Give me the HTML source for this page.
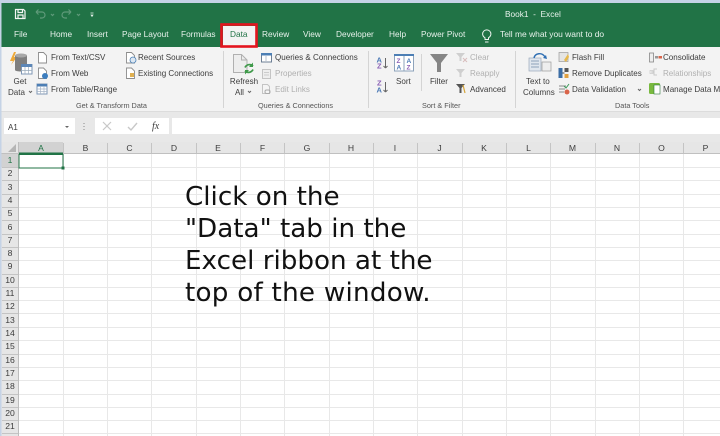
<!DOCTYPE html>
<html><head><meta charset="utf-8">
<style>
html,body{margin:0;padding:0;background:#fff}
#p{position:relative;width:720px;height:436px;overflow:hidden;background:#fff;font-family:"Liberation Sans",sans-serif}
.t{position:absolute;white-space:nowrap;font-size:8.05px;line-height:11px;color:#3c3c3c;filter:blur(.3px)}
.w{color:#e8f2ec;font-size:8.3px}
.d{color:#b0b0b0}
.g{color:#555;font-size:7.3px}
.h{font-size:8.6px}
.c{text-align:center;transform:translateX(-50%)}
.big{position:absolute;left:185px;font-family:"DejaVu Sans",sans-serif;font-size:26.2px;line-height:32px;color:#111;white-space:nowrap}
svg{position:absolute;left:0;top:0}
svg text{font-family:"Liberation Sans",sans-serif;font-weight:bold}
</style></head><body><div id="p">
<svg width="720" height="436" viewBox="0 0 720 436">
<!-- chrome -->
<rect width="720" height="436" fill="#fff"/>
<rect width="720" height="3" fill="#c5d3e6"/>
<rect y="3" width="720" height="44" fill="#217346"/>
<rect y="0" width="1.5" height="436" fill="#c5d3e6"/>
<rect x="1.5" y="47" width="719" height="64" fill="#f3f3f3"/>
<rect x="1.5" y="111" width="719" height="31" fill="#e8e8e8"/>
<rect x="1.5" y="111" width="719" height="1" fill="#dcdcdc"/>
<!-- formula bar -->
<rect x="4" y="118" width="71" height="16" fill="#fff"/>
<rect x="95" y="118" width="74" height="16" fill="#fff"/>
<rect x="172" y="118" width="548" height="16" fill="#fff"/>
<path d="M65 126l2 2 2-2z" fill="#666"/>
<path d="M84 123v1M84 126v1M84 129v1" stroke="#999" stroke-width="1.2"/>
<path d="M103 122l8 8M111 122l-8 8" stroke="#c8c8c8" stroke-width="1.2" fill="none"/>
<path d="M128 127l3 3 6-7" stroke="#c8c8c8" stroke-width="1.4" fill="none"/>
<!-- headers -->
<rect x="1.5" y="142" width="718.5" height="12" fill="#e6e6e6"/>
<rect x="1.5" y="153" width="718.5" height="1" fill="#c0c0c0"/>
<rect x="1.5" y="154" width="17.5" height="282" fill="#e6e6e6"/>
<rect x="18" y="142" width="1" height="294" fill="#bdbdbd"/>
<rect x="19" y="142" width="44" height="12" fill="#d2d2d2"/>
<rect x="19" y="152.500" width="44" height="1.500" fill="#217346"/>
<rect x="1.5" y="154" width="17" height="13.500" fill="#d2d2d2"/>
<path d="M16 144v8h-8z" fill="#b5b5b5"/>
<!-- grid -->
<g stroke="#e8e8e8" stroke-width="1">
<path d="M19 167.500H720M19 180.500H720M19 194.500H720M19 207.500H720M19 220.500H720M19 234.500H720M19 247.500H720M19 260.500H720M19 274.500H720M19 287.500H720M19 300.500H720M19 313.500H720M19 327.500H720M19 340.500H720M19 354.500H720M19 367.500H720M19 380.500H720M19 394.500H720M19 407.500H720M19 420.500H720M19 433.500H720"/>
<path d="M63.500 154V436M107.500 154V436M151.500 154V436M196.500 154V436M240.500 154V436M284.500 154V436M329.500 154V436M373.500 154V436M417.500 154V436M462.500 154V436M506.500 154V436M550.500 154V436M595.500 154V436M639.500 154V436M683.500 154V436"/>
</g>
<g stroke="#c4c4c4" stroke-width="1">
<path d="M63.500 143V153M107.500 143V153M151.500 143V153M196.500 143V153M240.500 143V153M284.500 143V153M329.500 143V153M373.500 143V153M417.500 143V153M462.500 143V153M506.500 143V153M550.500 143V153M595.500 143V153M639.500 143V153M683.500 143V153"/>
<path d="M2 167.500H18M2 180.500H18M2 194.500H18M2 207.500H18M2 220.500H18M2 234.500H18M2 247.500H18M2 260.500H18M2 274.500H18M2 287.500H18M2 300.500H18M2 313.500H18M2 327.500H18M2 340.500H18M2 354.500H18M2 367.500H18M2 380.500H18M2 394.500H18M2 407.500H18M2 420.500H18M2 433.500H18"/>
</g>
<!-- selected cell -->
<rect x="19" y="154.500" width="44" height="13.500" fill="#fff" stroke="#217346" stroke-width="1"/>
<rect x="61.500" y="166.500" width="3" height="3" fill="#217346"/>
<!-- QAT -->
<g fill="none" stroke="#f2f6f3" stroke-width="1.200">
<path d="M15.500 9.500h8l1.500 1.500v7.500h-9.500z"/><path d="M18 9.500v3h4.500v-3M18 18.500v-3.500h5v3.500"/>
</g>
<g fill="none" stroke="#5f9a7a" stroke-width="1.200">
<path d="M36 12h6a3 3 0 0 1 0 6h-2M36 12l2.500-2.500M36 12l2.500 2.500"/>
<path d="M71 12h-6a3 3 0 0 0 0 6h2M71 12l-2.500-2.500M71 12l-2.500 2.500"/>
<path d="M51 14l1.500 1.500 1.500-1.500M77 14l1.500 1.500 1.500-1.500"/>
</g>
<path d="M90.500 13h3M91 15h2l-1 1.500z" fill="#e8f2ec" stroke="#e8f2ec" stroke-width=".7"/>
<!-- red data tab -->
<rect x="223" y="26" width="33" height="21" fill="#f3f3f3"/>
<rect x="221.500" y="24.500" width="35" height="22" fill="none" stroke="#e4141e" stroke-width="2.600"/>
<!-- lightbulb -->
<path d="M485 42h3.500M485 39.500h3.500v-1.700c1.500-1 2.400-2.200 2.400-3.800a4.150 4.150 0 0 0-8.300 0c0 1.600.9 2.800 2.400 3.800z" fill="none" stroke="#eef5f0" stroke-width="1"/>
<!-- group separators -->
<g fill="#d4d4d4">
<rect x="223" y="51" width="1" height="57"/><rect x="368" y="51" width="1" height="57"/><rect x="421" y="54" width="1" height="37"/><rect x="515" y="51" width="1" height="57"/>
</g>
<!-- Get data -->
<path d="M14 52l-4 9h3l-2 4 6-8h-3l2-5z" fill="#eeaa3a"/>
<path d="M15 56c0-2.500 12-2.500 12 0v14c0 2-12 2-12 0z" fill="#7f7f7f"/><ellipse cx="21" cy="55.500" rx="6" ry="2" fill="#a8a8a8"/>
<rect x="21.500" y="64.500" width="10.500" height="9.500" fill="#fff" stroke="#7f97b5"/><rect x="21" y="64" width="11" height="3" fill="#5d87b7"/>
<path d="M25 67v7M28.500 67v7M21 70.500h11" stroke="#9ab" stroke-width=".7"/>
<path d="M29 91l1.500 1.500 1.500-1.500" stroke="#666" fill="none"/>
<!-- small icons left -->
<g fill="#fff" stroke="#8c8c8c" stroke-width=".9">
<path d="M38.500 52.500h5l3 3v7.500h-8z"/><path d="M38.500 68h5l3 3v7.500h-8z"/>
<path d="M126.500 52.500h5l3 3v7.500h-8z"/><path d="M126.500 68h5l3 3v7.500h-8z"/>
</g>
<circle cx="45" cy="76" r="3" fill="#3d7ebf"/>
<circle cx="133" cy="60" r="3" fill="#dce7f2" stroke="#4a7fb5" stroke-width=".8"/>
<rect x="130" y="73" width="4" height="4" fill="#e0b050"/>
<rect x="37" y="84" width="10" height="10" fill="#fff" stroke="#7f97b5"/><rect x="37" y="84" width="10" height="2.500" fill="#4d7fb5"/>
<path d="M40.500 86v8M44 86v8M37 89h10M37 91.500h10" stroke="#a7b5c6" stroke-width=".7"/>
<!-- Refresh -->
<path d="M233.500 54.500h8l5.500 5.500v12.500h-13.500z" fill="#ededed" stroke="#b0b0b0"/>
<path d="M241.500 54.500v5.500h5.500" fill="none" stroke="#b0b0b0"/>
<path d="M253 66a5 5 0 0 0-8 1.500M245 71a5 5 0 0 0 8-1.500" fill="none" stroke="#3f9a4a" stroke-width="1.700"/>
<path d="M253 62.500v4.500h-4zM245 74.500v-4.500h4z" fill="#3f9a4a"/>
<path d="M248 91l1.500 1.500 1.500-1.500" stroke="#666" fill="none"/>
<!-- queries icons -->
<rect x="261.500" y="53.500" width="10" height="8.500" fill="#fff" stroke="#6d7f95"/><rect x="261" y="53" width="11" height="2.500" fill="#4d7fb5"/>
<path d="M266 56v6" stroke="#b8c2cc"/>
<rect x="262.500" y="69.500" width="8" height="9" fill="#eee" stroke="#c4c4c4"/><path d="M264 72.500h5M264 75h5" stroke="#ccc"/>
<path d="M262.500 84.500h5l2 2v7h-7z" fill="#f5f5f5" stroke="#c4c4c4"/><rect x="265" y="90" width="5" height="3.500" rx="1.500" fill="none" stroke="#aaa"/>
<!-- sort icons -->
<text x="376.500" y="62.500" font-size="7.500" fill="#4a78b5">A</text>
<text x="377" y="68.500" font-size="7.500" fill="#8a5fb5">Z</text>
<text x="377" y="85.500" font-size="7.500" fill="#8a5fb5">Z</text>
<text x="376.500" y="92.500" font-size="7.500" fill="#4a78b5">A</text>
<path d="M385.500 58v10M385.500 68l-2-2M385.500 68l2-2M385.500 82v10M385.500 92l-2-2M385.500 92l2-2" stroke="#666" fill="none"/>
<rect x="394.500" y="55.500" width="19" height="15.500" fill="#fff" stroke="#8ea3bb"/>
<rect x="394" y="54" width="20" height="2" fill="#4d7fb5"/><path d="M404 56v15" stroke="#8ea3bb"/>
<text x="396.500" y="63" font-size="6.500" fill="#8a5fb5">Z</text><text x="396.500" y="69.500" font-size="6.500" fill="#4a78b5">A</text>
<text x="406.500" y="63" font-size="6.500" fill="#4a78b5">A</text><text x="406.500" y="69.500" font-size="6.500" fill="#8a5fb5">Z</text>
<!-- filter -->
<path d="M430 54h18l-7 9v9h-4v-9z" fill="#858585"/>
<path d="M456 53h9l-3.500 4v4h-2v-4z" fill="#cfcfcf"/><path d="M463 58l4 4M467 58l-4 4" stroke="#d8bcbc"/>
<path d="M456 69h9l-3.500 4v4h-2v-4z" fill="#cfcfcf"/>
<path d="M456 84h9l-3.500 4v5h-2v-5z" fill="#555"/><path d="M463 85l2 8" stroke="#d6a53a" stroke-width="1.200"/>
<!-- text to columns -->
<rect x="529" y="58" width="12" height="13" fill="#dfe6ee" stroke="#9aa9ba" stroke-width=".7"/>
<path d="M531 61h8M531 64h8M531 67h8" stroke="#8da3bb"/>
<rect x="542" y="62" width="9" height="9" fill="#eee" stroke="#999" stroke-width=".7"/>
<path d="M534 58c1-5 8-6 11-1" fill="none" stroke="#2f6fb3" stroke-width="1.400"/><path d="M547 59l-4-1 3-3z" fill="#2f6fb3"/>
<!-- data tools -->
<rect x="559" y="52.500" width="9" height="9" fill="#e5e5e5" stroke="#999" stroke-width=".7"/><path d="M564 60l4-6 1 3-3 5z" fill="#e6b84c"/>
<rect x="558.500" y="68" width="4" height="10" fill="#3c6ea6"/><rect x="564.500" y="68" width="4" height="4" fill="#555"/><rect x="564.500" y="74" width="4" height="4" fill="#e0a040"/><path d="M562.500 73h2" stroke="#444"/>
<path d="M559 86h7M559 89h6M559 92h5" stroke="#888"/><path d="M564 86l2 2 3-4" stroke="#3c9a5a" fill="none"/><circle cx="567" cy="92" r="2.500" fill="#d9644a"/>
<rect x="649.500" y="53" width="4" height="9" fill="#eee" stroke="#888" stroke-width=".8"/><rect x="655" y="56" width="3" height="2.500" fill="#999"/><rect x="658.500" y="56" width="3.500" height="2.500" fill="#d9644a"/>
<path d="M651 72h3M654 72v-3h3M654 72v3h3" stroke="#c8c8c8" fill="none"/><rect x="650" y="70.500" width="3" height="3" fill="none" stroke="#c8c8c8" stroke-width=".7"/>
<rect x="649" y="83" width="11" height="11" rx="1.500" fill="#79b93f"/><rect x="654" y="85" width="6" height="9" fill="#fff" stroke="#2f7a3f" stroke-width=".6"/>
<path d="M638 89l1.500 1.500 1.500-1.500" stroke="#666" fill="none"/>
</svg>
<span class="t w" style="left:14px;top:29px">File</span>
<span class="t w" style="left:50px;top:29px">Home</span>
<span class="t w" style="left:87px;top:29px">Insert</span>
<span class="t w" style="left:122px;top:29px">Page Layout</span>
<span class="t w" style="left:181px;top:29px">Formulas</span>
<span class="t" style="left:230px;top:29px;color:#217346;font-size:8.3px">Data</span>
<span class="t w" style="left:262px;top:29px">Review</span>
<span class="t w" style="left:303px;top:29px">View</span>
<span class="t w" style="left:336px;top:29px">Developer</span>
<span class="t w" style="left:389px;top:29px">Help</span>
<span class="t w" style="left:421px;top:29px">Power Pivot</span>
<span class="t w" style="left:500px;top:29px;font-size:8.45px">Tell me what you want to do</span>
<span class="t w" style="left:505px;top:9px">Book1 &nbsp;- &nbsp;Excel</span>
<span class="t c" style="left:20px;top:76px">Get</span>
<span class="t" style="left:8px;top:87px">Data</span>
<span class="t" style="left:51px;top:52px">From Text/CSV</span>
<span class="t" style="left:51px;top:68px">From Web</span>
<span class="t" style="left:51px;top:84px">From Table/Range</span>
<span class="t" style="left:138px;top:52px">Recent Sources</span>
<span class="t" style="left:138px;top:68px">Existing Connections</span>
<span class="t g" style="left:76px;top:100px">Get &amp; Transform Data</span>
<span class="t c" style="left:244px;top:76px">Refresh</span>
<span class="t" style="left:235px;top:87px">All</span>
<span class="t" style="left:275px;top:52px">Queries &amp; Connections</span>
<span class="t d" style="left:275px;top:68px">Properties</span>
<span class="t d" style="left:275px;top:84px">Edit Links</span>
<span class="t g" style="left:258px;top:100px">Queries &amp; Connections</span>
<span class="t" style="left:396px;top:76px">Sort</span>
<span class="t" style="left:430px;top:76px">Filter</span>
<span class="t d" style="left:470px;top:52px">Clear</span>
<span class="t d" style="left:470px;top:68px">Reapply</span>
<span class="t" style="left:470px;top:84px">Advanced</span>
<span class="t g" style="left:422px;top:100px">Sort &amp; Filter</span>
<span class="t" style="left:526px;top:76px">Text to</span>
<span class="t" style="left:523px;top:87px">Columns</span>
<span class="t" style="left:572px;top:52px">Flash Fill</span>
<span class="t" style="left:572px;top:68px">Remove Duplicates</span>
<span class="t" style="left:572px;top:84px">Data Validation</span>
<span class="t" style="left:663px;top:52px">Consolidate</span>
<span class="t d" style="left:663px;top:68px">Relationships</span>
<span class="t" style="left:663px;top:84px">Manage Data M</span>
<span class="t g" style="left:615px;top:100px">Data Tools</span>
<span class="t" style="left:8px;top:122px;font-size:8px">A1</span>
<span class="t" style="left:152px;top:121px;font-family:'Liberation Serif',serif;font-style:italic;font-size:10px">fx</span>
<span class="t c h" style="left:41px;top:143px;color:#217346">A</span>
<span class="t c h" style="left:85.500px;top:143px">B</span><span class="t c h" style="left:129.500px;top:143px">C</span><span class="t c h" style="left:174px;top:143px">D</span><span class="t c h" style="left:218px;top:143px">E</span><span class="t c h" style="left:262.500px;top:143px">F</span><span class="t c h" style="left:307px;top:143px">G</span><span class="t c h" style="left:351px;top:143px">H</span><span class="t c h" style="left:395px;top:143px">I</span><span class="t c h" style="left:439.500px;top:143px">J</span><span class="t c h" style="left:484px;top:143px">K</span><span class="t c h" style="left:528.500px;top:143px">L</span><span class="t c h" style="left:572.500px;top:143px">M</span><span class="t c h" style="left:617px;top:143px">N</span><span class="t c h" style="left:661.500px;top:143px">O</span><span class="t c h" style="left:705.500px;top:143px">P</span>
<span class="t c h" style="left:10px;top:155px;color:#217346">1</span><span class="t c h" style="left:10px;top:168px">2</span><span class="t c h" style="left:10px;top:182px">3</span><span class="t c h" style="left:10px;top:195px">4</span><span class="t c h" style="left:10px;top:208px">5</span><span class="t c h" style="left:10px;top:222px">6</span><span class="t c h" style="left:10px;top:235px">7</span><span class="t c h" style="left:10px;top:248px">8</span><span class="t c h" style="left:10px;top:261px">9</span><span class="t c h" style="left:10px;top:275px">10</span><span class="t c h" style="left:10px;top:288px">11</span><span class="t c h" style="left:10px;top:301px">12</span><span class="t c h" style="left:10px;top:315px">13</span><span class="t c h" style="left:10px;top:328px">14</span><span class="t c h" style="left:10px;top:341px">15</span><span class="t c h" style="left:10px;top:355px">16</span><span class="t c h" style="left:10px;top:368px">17</span><span class="t c h" style="left:10px;top:381px">18</span><span class="t c h" style="left:10px;top:395px">19</span><span class="t c h" style="left:10px;top:408px">20</span><span class="t c h" style="left:10px;top:421px">21</span>
<div class="big" style="top:181px">Click on the</div>
<div class="big" style="top:213px">"Data" tab in the</div>
<div class="big" style="top:245px">Excel ribbon at the</div>
<div class="big" style="top:277px;letter-spacing:.25px">top of the window.</div>
</div></body></html>
